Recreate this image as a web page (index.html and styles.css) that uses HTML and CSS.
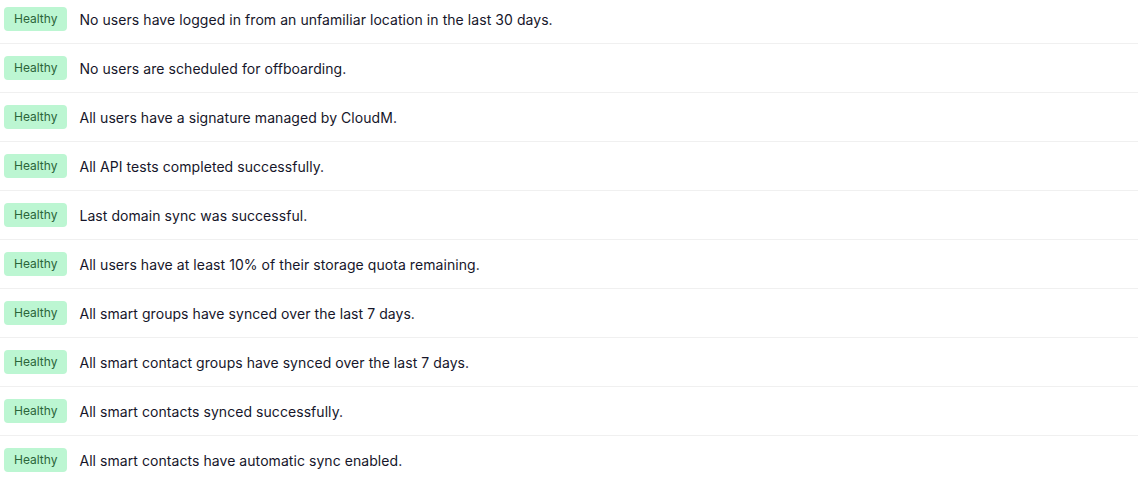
FILE: index.html
```html
<!DOCTYPE html>
<html lang="en">
<head>
    <meta charset="UTF-8">
    <title>Health checks</title>
    <link rel="stylesheet" href="styles.css">
</head>
<body>
    <ul class="checks">
        <li class="check"><span class="badge">Healthy</span><span class="msg">No users have logged in from an unfamiliar location in the last 30 days.</span></li>
        <li class="check"><span class="badge">Healthy</span><span class="msg">No users are scheduled for offboarding.</span></li>
        <li class="check"><span class="badge">Healthy</span><span class="msg">All users have a signature managed by CloudM.</span></li>
        <li class="check"><span class="badge">Healthy</span><span class="msg">All API tests completed successfully.</span></li>
        <li class="check"><span class="badge">Healthy</span><span class="msg">Last domain sync was successful.</span></li>
        <li class="check"><span class="badge">Healthy</span><span class="msg">All users have at least 10% of their storage quota remaining.</span></li>
        <li class="check"><span class="badge">Healthy</span><span class="msg">All smart groups have synced over the last 7 days.</span></li>
        <li class="check"><span class="badge">Healthy</span><span class="msg">All smart contact groups have synced over the last 7 days.</span></li>
        <li class="check"><span class="badge">Healthy</span><span class="msg">All smart contacts synced successfully.</span></li>
        <li class="check"><span class="badge">Healthy</span><span class="msg">All smart contacts have automatic sync enabled.</span></li>
    </ul>
</body>
</html>
```

FILE: styles.css
```css
body {
    margin: 0;
    font-family: 'Inter', 'Noto Sans', sans-serif;
    background: #ffffff;
    color: #16162a;
    overflow: hidden;
}

.checks {
    list-style: none;
    margin: -5px 0 0 0;
    padding: 0;
}

.check {
    display: flex;
    align-items: center;
    gap: 12px;
    padding: 12px 4px;
    border-bottom: 1px solid #f0f0f0;
}

.check:last-child {
    border-bottom: none;
}

.badge {
    display: inline-block;
    height: 24px;
    line-height: 24px;
    padding: 0 10px;
    font-size: 12px;
    border-radius: 4px;
    background-color: #bcf6d2;
    color: #2b653a;
}

.msg {
    font-size: 14px;
    letter-spacing: 0.06px;
}
```
